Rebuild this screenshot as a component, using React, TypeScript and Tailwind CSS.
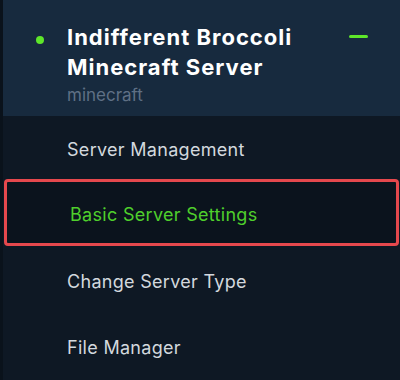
export default function App() {
  const items = [
    { label: 'Server Management', active: false },
    { label: 'Basic Server Settings', active: true },
    { label: 'Change Server Type', active: false },
    { label: 'File Manager', active: false },
  ];

  return (
    <div
      className="w-[400px] h-[380px] flex bg-[#0e1824] overflow-hidden"
      style={{ fontFamily: 'Inter, "Noto Sans", sans-serif' }}
    >
      {/* left edge strip */}
      <div className="w-[3px] shrink-0 bg-[#0a121b]" />

      <div className="flex-1 flex flex-col">
        {/* Server header */}
        <div className="h-[116px] shrink-0 bg-[#172a3e] flex items-start pt-[22px] pl-[33px] pr-[32px]">
          <span className="mt-[14px] w-[8px] h-[8px] rounded-full bg-[#5ee62a] shrink-0" />
          <div className="ml-[23px] flex-1">
            <h1 className="text-[22px] leading-[30px] font-bold text-white tracking-[1px]">
              Indifferent Broccoli
              <br />
              Minecraft Server
            </h1>
            <p className="text-[17px] leading-[26px] text-[#5f7085]">minecraft</p>
          </div>
          <span className="mt-[13px] w-[19px] h-[3px] rounded-full bg-[#5ee62a] shrink-0" />
        </div>

        {/* Menu */}
        <nav className="flex flex-col">
          {items.map((item) =>
            item.active ? (
              <div
                key={item.label}
                className="mx-[1px] mt-[-3px] mb-[2px] h-[67px] flex items-center pt-[3px] pl-[63px] border-[3px] border-[#e5484d] rounded-[4px] bg-[#0b131d]"
              >
                <span className="text-[18px] tracking-[0.3px] text-[#4fcf2c]">{item.label}</span>
              </div>
            ) : (
              <div key={item.label} className="h-[66px] flex items-center pl-[64px]">
                <span className="text-[18px] tracking-[0.3px] text-[#d3d8de]">{item.label}</span>
              </div>
            )
          )}
        </nav>
      </div>
    </div>
  );
}
